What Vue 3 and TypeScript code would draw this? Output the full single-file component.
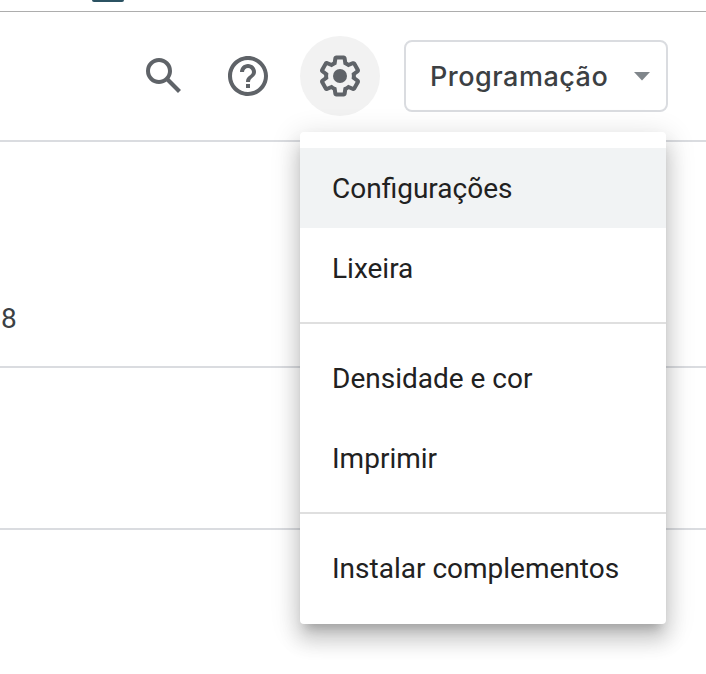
<script setup lang="ts">
interface MenuItem {
  label: string
  active?: boolean
}

const groups: MenuItem[][] = [
  [{ label: 'Configurações', active: true }, { label: 'Lixeira' }],
  [{ label: 'Densidade e cor' }, { label: 'Imprimir' }],
  [{ label: 'Instalar complementos' }],
]
</script>

<template>
  <div class="page">
    <div class="browser-edge"><span class="tab-mark"></span></div>
    <header class="toolbar">
      <button class="icon-button" aria-label="Pesquisar">
        <svg viewBox="0 0 24 24"><path d="M20.49 19l-5.73-5.73C15.53 12.2 16 10.91 16 9.5A6.5 6.5 0 1 0 9.5 16c1.41 0 2.7-.47 3.77-1.24L19 20.49 20.49 19zM5 9.5C5 7.01 7.01 5 9.5 5S14 7.01 14 9.5 11.99 14 9.5 14 5 11.99 5 9.5z" /></svg>
      </button>
      <button class="icon-button" aria-label="Ajuda">
        <svg viewBox="0 0 24 24"><path d="M11 18h2v-2h-2v2zm1-16C6.48 2 2 6.48 2 12s4.48 10 10 10 10-4.48 10-10S17.52 2 12 2zm0 18c-4.41 0-8-3.59-8-8s3.59-8 8-8 8 3.59 8 8-3.59 8-8 8zm0-14c-2.21 0-4 1.79-4 4h2c0-1.1.9-2 2-2s2 .9 2 2c0 2-3 1.75-3 5h2c0-2.25 3-2.5 3-5 0-2.21-1.79-4-4-4z" /></svg>
      </button>
      <div class="settings">
        <button class="icon-button selected" aria-label="Menu de configurações">
          <svg viewBox="0 0 24 24">
            <path d="M13.85 22.25h-3.7c-.74 0-1.36-.54-1.45-1.27l-.27-1.89c-.27-.14-.53-.29-.79-.46l-1.8.72c-.7.26-1.47-.03-1.81-.65L2.2 15.53c-.35-.66-.2-1.44.36-1.88l1.53-1.19c-.01-.15-.02-.3-.02-.46 0-.15.01-.31.02-.46l-1.52-1.19c-.59-.45-.74-1.26-.37-1.88l1.85-3.19c.34-.62 1.11-.9 1.79-.63l1.81.73c.26-.17.52-.32.78-.46l.27-1.91c.09-.7.71-1.25 1.44-1.25h3.7c.74 0 1.36.54 1.45 1.27l.27 1.89c.27.14.53.29.79.46l1.8-.72c.71-.26 1.48.03 1.82.65l1.84 3.18c.36.66.2 1.44-.36 1.88l-1.52 1.19c.01.15.02.3.02.46s-.01.31-.02.46l1.52 1.19c.56.45.72 1.23.37 1.86l-1.86 3.22c-.34.62-1.11.9-1.8.63l-1.8-.72c-.26.17-.52.32-.78.46l-.27 1.91c-.1.68-.72 1.22-1.46 1.22zm-3.23-2h2.76l.37-2.55.53-.22c.44-.18.88-.44 1.34-.78l.45-.34 2.38.96 1.38-2.4-2.03-1.58.07-.56c.03-.26.06-.51.06-.78s-.03-.53-.06-.78l-.07-.56 2.03-1.58-1.39-2.4-2.39.96-.45-.35c-.42-.32-.87-.58-1.33-.77l-.52-.22-.37-2.55h-2.76l-.37 2.55-.53.21c-.44.19-.88.44-1.34.79l-.45.33-2.38-.95-1.39 2.39 2.03 1.58-.07.56a7 7 0 0 0-.06.79c0 .26.02.53.06.78l.07.56-2.03 1.58 1.38 2.4 2.39-.96.45.35c.43.33.86.58 1.33.77l.53.22.38 2.55z" />
            <circle cx="12" cy="12" r="3.5" />
          </svg>
        </button>
        <nav class="menu">
          <ul v-for="(group, i) in groups" :key="i" class="group">
            <li v-for="item in group" :key="item.label" class="item" :class="{ active: item.active }">
              {{ item.label }}
            </li>
          </ul>
        </nav>
      </div>
      <button class="view-select">
        <span>Programação</span>
        <svg class="caret" viewBox="0 0 16 9"><path d="M0 0h16L8 8.5z" /></svg>
      </button>
    </header>
    <main>
      <section class="row first"><span class="day">8</span></section>
      <section class="row second"></section>
    </main>
  </div>
</template>

<style>
body {
  margin: 0;
  background: #fff;
}
</style>

<style scoped>
.page {
  height: 674px;
  overflow: hidden;
  background: #fff;
  font-family: Roboto, "Liberation Sans", sans-serif;
}
.browser-edge {
  box-sizing: border-box;
  height: 12px;
  padding-left: 92px;
  border-bottom: 1px solid #adadad;
}
.tab-mark {
  display: block;
  width: 32px;
  height: 2px;
  border-radius: 0 0 3px 3px;
  background: #2b5262;
}
.toolbar {
  box-sizing: border-box;
  display: flex;
  height: 130px;
  padding: 24px 0 0 124px;
  border-bottom: 2px solid #dadce0;
}
button {
  margin: 0;
  font: inherit;
}
.icon-button {
  display: flex;
  align-items: center;
  justify-content: center;
  width: 80px;
  height: 80px;
  margin-right: 4px;
  padding: 0;
  border: 0;
  border-radius: 50%;
  background: transparent;
}
.icon-button svg {
  width: 48px;
  height: 48px;
  fill: #5f6368;
}
.icon-button.selected {
  margin-right: 24px;
  background: #f2f2f2;
}
.settings {
  position: relative;
  margin-left: 8px;
}
.view-select {
  box-sizing: border-box;
  display: flex;
  align-items: center;
  justify-content: space-between;
  width: 264px;
  height: 72px;
  margin-top: 4px;
  padding: 0 16px 0 24px;
  border: 2px solid #dadce0;
  border-radius: 8px;
  background: transparent;
  color: #3c4043;
  font-family: Inter, Roboto, sans-serif;
  font-size: 27px;
  font-weight: 500;
  letter-spacing: 0.5px;
  white-space: nowrap;
}
.caret {
  width: 16px;
  height: 9px;
  margin-top: 1px;
  fill: #80868b;
}
.menu {
  position: absolute;
  z-index: 1;
  top: 96px;
  left: 0;
  box-sizing: border-box;
  width: 366px;
  padding: 16px 0;
  border-radius: 4px;
  background: #fff;
  box-shadow:
    0 10px 10px -6px rgba(0, 0, 0, 0.2),
    0 16px 20px 2px rgba(0, 0, 0, 0.14),
    0 6px 28px 4px rgba(0, 0, 0, 0.12);
}
.group {
  margin: 0;
  padding: 0;
  list-style: none;
}
.group + .group {
  margin-top: 14px;
  padding-top: 14px;
  border-top: 2px solid #dfdfdf;
}
.item {
  height: 80px;
  padding: 0 32px;
  color: #212121;
  font-size: 28px;
  line-height: 82px;
  white-space: nowrap;
}
.item.active {
  background: #f1f3f4;
}
.row {
  box-sizing: border-box;
  border-bottom: 2px solid #dadce0;
}
.first {
  height: 226px;
  padding-top: 160px;
}
.second {
  height: 162px;
}
.day {
  display: block;
  padding-left: 1px;
  color: #3c4043;
  font-size: 28px;
  line-height: 33px;
}
</style>
